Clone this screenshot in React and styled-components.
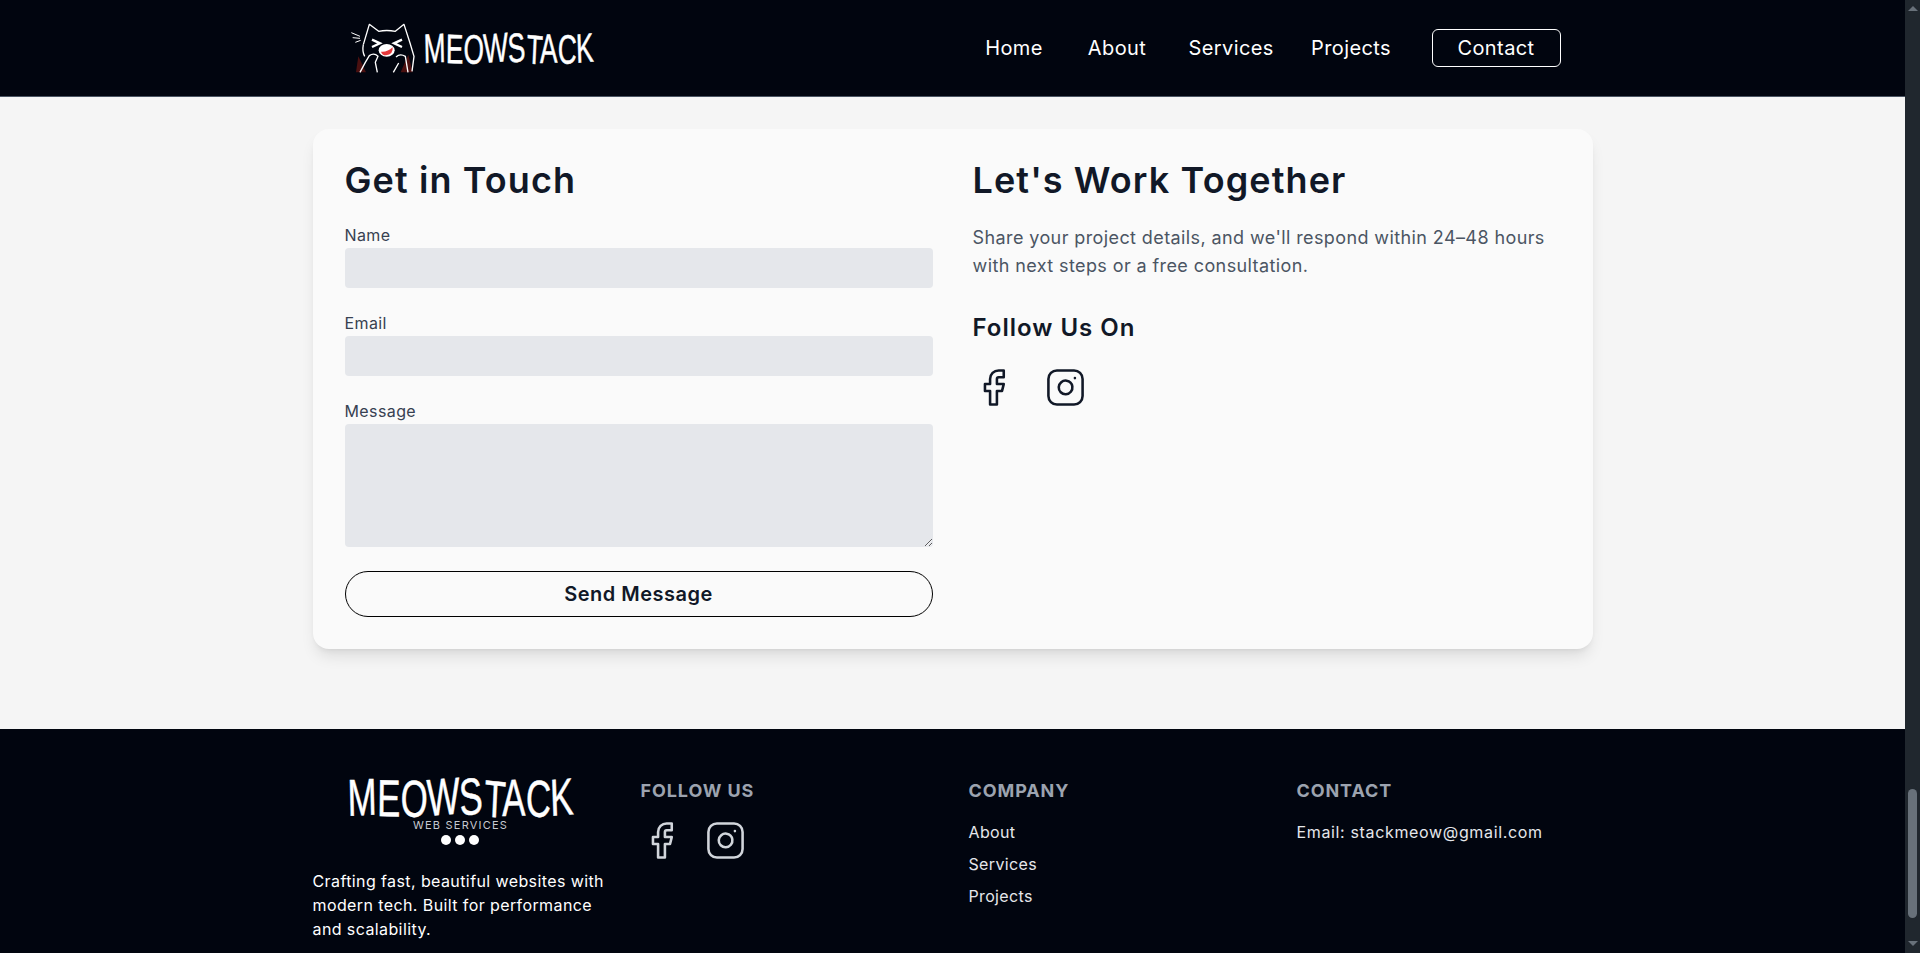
import styled, { createGlobalStyle } from "styled-components";
import { Facebook, Instagram } from "lucide-react";

const fontStack = `Inter, "Noto Sans", "Liberation Sans", sans-serif`;

const GlobalStyle = createGlobalStyle`
  html, body {
    margin: 0;
    height: 100%;
    overflow: hidden;
    background: #f5f5f5;
    font-family: ${fontStack};
  }
  * {
    box-sizing: border-box;
  }
`;

const Window = styled.div`
  display: flex;
  width: 100vw;
  height: 100vh;
  overflow: hidden;
`;

const Page = styled.div`
  flex: 1;
  min-width: 0;
  display: flex;
  flex-direction: column;
  overflow: hidden;
`;

const ScrollBar = styled.div`
  width: 15px;
  flex-shrink: 0;
  display: flex;
  flex-direction: column;
  align-items: center;
  padding: 6px 0 7px;
  background: #20272e;
`;

const ScrollArrow = styled.div`
  width: 0;
  height: 0;
  border-left: 5px solid transparent;
  border-right: 5px solid transparent;
  ${({ $down }) =>
    $down ? "border-top: 5px solid #68717a;" : "border-bottom: 5px solid #68717a;"}
`;

const ScrollThumb = styled.div`
  width: 9px;
  height: 129px;
  margin-top: auto;
  margin-bottom: 23px;
  border-radius: 5px;
  background: #68717a;
`;

const Header = styled.header`
  height: 97px;
  flex-shrink: 0;
  background: #01050f;
  border-bottom: 1px solid #4b5563;
`;

const HeaderInner = styled.div`
  width: 1280px;
  height: 96px;
  margin: 0 auto;
  padding: 0 32px;
  display: flex;
  align-items: center;
  justify-content: space-between;
`;

const Brand = styled.div`
  display: flex;
  align-items: center;
  gap: 9px;
  margin-left: 5px;
`;

const Nav = styled.nav`
  display: flex;
  align-items: center;
  gap: 40px;
`;

const NavLink = styled.a`
  width: ${({ $width }) => $width}px;
  color: #fff;
  font-size: 20px;
  font-weight: 400;
  letter-spacing: 0.4px;
  text-align: center;
  white-space: nowrap;
  text-decoration: none;
`;

const ContactLink = styled(NavLink)`
  width: 129px;
  height: 38px;
  display: flex;
  align-items: center;
  justify-content: center;
  border: 1px solid #fff;
  border-radius: 6px;
`;

const Section = styled.section`
  padding: 32px 0 80px;
`;

const Card = styled.div`
  width: 1280px;
  height: 520px;
  margin: 0 auto;
  padding: 32px;
  display: grid;
  grid-template-columns: 1fr 1fr;
  gap: 40px;
  background: #fafafa;
  border-radius: 16px;
  box-shadow: 0 10px 15px -3px rgba(0, 0, 0, 0.1), 0 4px 6px -4px rgba(0, 0, 0, 0.1);
`;

const Heading = styled.h2`
  margin: 0 0 25px;
  font-size: 36px;
  line-height: 38px;
  font-weight: 600;
  letter-spacing: 1.1px;
  color: #111827;
`;

const Form = styled.form`
  display: flex;
  flex-direction: column;
  gap: 24px;
`;

const Field = styled.label`
  display: flex;
  flex-direction: column;
  gap: 2px;
  font-size: 16px;
  line-height: 22px;
  letter-spacing: 0.4px;
  color: #374151;
`;

const Input = styled.input`
  height: 40px;
  border: 0;
  border-radius: 4px;
  background: #e5e7eb;
`;

const TextArea = styled.textarea`
  height: 123px;
  border: 0;
  border-radius: 4px;
  background: #e5e7eb;
  display: block;
  resize: vertical;
`;

const SendButton = styled.button`
  height: 46px;
  border: 1px solid #000;
  border-radius: 999px;
  background: transparent;
  color: #111827;
  font-family: ${fontStack};
  font-size: 20px;
  font-weight: 600;
  letter-spacing: 0.5px;
`;

const Lead = styled.p`
  margin: 0 0 32px;
  font-size: 18px;
  line-height: 28px;
  letter-spacing: 0.4px;
  color: #4b5563;
`;

const SubHeading = styled.h3`
  margin: 0 0 23px;
  font-size: 24px;
  line-height: 32px;
  font-weight: 600;
  letter-spacing: 1px;
  color: #111827;
`;

const Socials = styled.div`
  display: flex;
  gap: ${({ $gap }) => $gap}px;
  color: ${({ $color }) => $color};
`;

const Footer = styled.footer`
  flex: 1;
  background: #01050f;
  padding-top: 47px;
`;

const FooterGrid = styled.div`
  width: 1280px;
  margin: 0 auto;
  display: grid;
  grid-template-columns: repeat(4, 1fr);
  gap: 32px;
`;

const FooterLogo = styled.div`
  display: flex;
  flex-direction: column;
  align-items: center;
  margin-bottom: 24px;
`;

const Tagline = styled.div`
  font-size: 11px;
  line-height: 14px;
  letter-spacing: 1.2px;
  color: #c7cad1;
`;

const Dots = styled.div`
  display: flex;
  gap: 4px;
  margin-top: 3px;
  margin-right: 2px;
`;

const Dot = styled.span`
  width: 10px;
  height: 10px;
  border-radius: 50%;
  background: #fff;
`;

const FooterText = styled.p`
  margin: 0;
  font-size: 16px;
  line-height: 24px;
  letter-spacing: 0.4px;
  color: #fff;
`;

const FooterTitle = styled.h4`
  margin: 0 0 ${({ $gap }) => $gap}px;
  padding-top: 1px;
  font-size: 18px;
  line-height: 28px;
  font-weight: 700;
  letter-spacing: 0.9px;
  color: #9ca3af;
`;

const FooterList = styled.div`
  display: flex;
  flex-direction: column;
  gap: 8px;
`;

const FooterLink = styled.a`
  font-size: 16px;
  line-height: 24px;
  letter-spacing: 0.35px;
  color: #e5e7eb;
`;

const FooterEmail = styled(FooterLink)`
  letter-spacing: 0.65px;
`;

const WordmarkSvg = styled.svg`
  display: block;
  overflow: visible;
`;

const Wordmark = ({ width, height, size }) => (
  <WordmarkSvg width={width} height={height} viewBox={`0 0 ${width} ${height}`}>
    <text
      x="0"
      y={height - 2}
      textLength={width}
      lengthAdjust="spacingAndGlyphs"
      rotate="-2 1 2 -3 -5 4 -1 2 -3"
      fill="#fff"
      stroke="#fff"
      strokeWidth="0.5"
      fontFamily='"Liberation Sans Narrow", "Liberation Sans", sans-serif'
      fontSize={size}
    >
      MEOWSTACK
    </text>
  </WordmarkSvg>
);

const CatLogo = () => (
  <svg width="65" height="50" viewBox="60 70 195 150" fill="none">
    <path d="M85 170 L78 218 L108 218 Z" fill="#4a1010" />
    <path d="M235 165 L248 218 L212 218 Z" fill="#4a1010" />
    <path
      d="M100 135 L118 74 L146 95 Q170 90 196 95 L222 74 L240 130 L252 170 L246 215"
      stroke="#fff"
      strokeWidth="4"
      strokeLinejoin="round"
    />
    <path d="M100 135 Q96 155 104 170" stroke="#fff" strokeWidth="4" />
    <path
      d="M64 99 L90 110 M68 114 L90 116 M76 128 L92 122"
      stroke="#fff"
      strokeWidth="3"
    />
    <path
      d="M126 120 L150 131 L126 142 M216 120 L192 131 L216 142"
      stroke="#fff"
      strokeWidth="7"
    />
    <ellipse cx="170" cy="152" rx="24" ry="19" fill="#fff" />
    <path d="M153 156 Q172 158 188 143 Q190 165 168 167 Q156 167 153 156 Z" fill="#e5383b" />
    <path
      d="M90 218 L106 188 L118 168 Q132 158 144 170 L136 188 L142 218"
      stroke="#fff"
      strokeWidth="4"
      strokeLinejoin="round"
    />
    <path
      d="M198 172 Q210 160 226 170 L234 218 M206 190 L190 218"
      stroke="#fff"
      strokeWidth="4"
      strokeLinejoin="round"
    />
  </svg>
);

const SocialIcons = ({ gap, color }) => (
  <Socials $gap={gap} $color={color}>
    <Facebook size={41} strokeWidth={1.5} />
    <Instagram size={41} strokeWidth={1.5} />
  </Socials>
);

const App = () => (
  <Window>
    <GlobalStyle />
    <Page>
      <Header>
        <HeaderInner>
          <Brand>
            <CatLogo />
            <Wordmark width={170} height={34} size={41} />
          </Brand>
          <Nav>
            <NavLink $width={63}>Home</NavLink>
            <NavLink $width={63}>About</NavLink>
            <NavLink $width={82}>Services</NavLink>
            <NavLink $width={81}>Projects</NavLink>
            <ContactLink>Contact</ContactLink>
          </Nav>
        </HeaderInner>
      </Header>
      <Section>
        <Card>
          <div>
            <Heading>Get in Touch</Heading>
            <Form>
              <Field>
                Name
                <Input />
              </Field>
              <Field>
                Email
                <Input />
              </Field>
              <Field>
                Message
                <TextArea />
              </Field>
              <SendButton type="button">Send Message</SendButton>
            </Form>
          </div>
          <div>
            <Heading>Let's Work Together</Heading>
            <Lead>
              Share your project details, and we'll respond within 24–48 hours
              with next steps or a free consultation.
            </Lead>
            <SubHeading>Follow Us On</SubHeading>
            <SocialIcons gap={31} color="#111827" />
          </div>
        </Card>
      </Section>
      <Footer>
        <FooterGrid>
          <div>
            <FooterLogo>
              <Wordmark width={226} height={42} size={52} />
              <Tagline>WEB SERVICES</Tagline>
              <Dots>
                <Dot />
                <Dot />
                <Dot />
              </Dots>
            </FooterLogo>
            <FooterText>
              Crafting fast, beautiful websites with modern tech. Built for
              performance and scalability.
            </FooterText>
          </div>
          <div>
            <FooterTitle $gap={15}>FOLLOW US</FooterTitle>
            <SocialIcons gap={23} color="#d1d5db" />
          </div>
          <div>
            <FooterTitle $gap={15}>COMPANY</FooterTitle>
            <FooterList>
              <FooterLink>About</FooterLink>
              <FooterLink>Services</FooterLink>
              <FooterLink>Projects</FooterLink>
            </FooterList>
          </div>
          <div>
            <FooterTitle $gap={15}>CONTACT</FooterTitle>
            <FooterList>
              <FooterEmail>Email: stackmeow@gmail.com</FooterEmail>
            </FooterList>
          </div>
        </FooterGrid>
      </Footer>
    </Page>
    <ScrollBar>
      <ScrollArrow />
      <ScrollThumb />
      <ScrollArrow $down />
    </ScrollBar>
  </Window>
);

export default App;
